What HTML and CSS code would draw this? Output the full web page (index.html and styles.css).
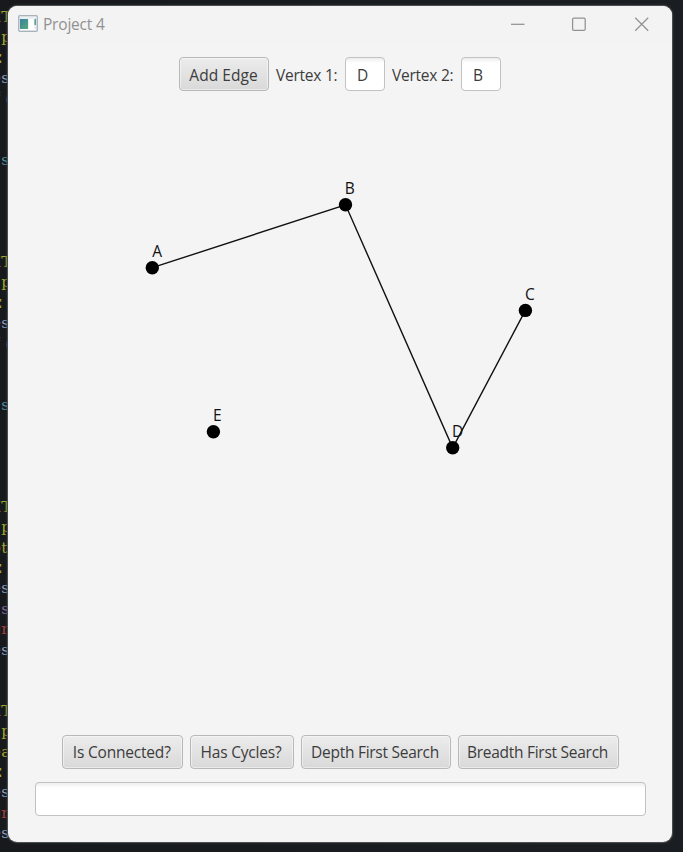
FILE: index.html
```html
<!DOCTYPE html>
<html lang="en">
<head>
<meta charset="utf-8">
<title>Project 4</title>
<link rel="stylesheet" href="styles.css">
</head>
<body>
<pre class="code"><i>E</i><b class="olive">T</b>
<i>-</i><b class="olive">p</b>
<i class="olive colon">:</i>
<i>e</i><b class="blue">s</b>
<i class="teal">f</i> <b class="blue paren">(</b>


<i>.</i><b class="teal">s</b>




<i>E</i><b class="olive">T</b>
<i>-</i><b class="olive">p</b>
<i class="olive colon">:</i>
<i>e</i><b class="blue">s</b>
<i class="teal">f</i> <b class="blue paren">(</b>


<i>.</i><b class="teal">s</b>




<i>E</i><b class="olive">T</b>
<i>-</i><b class="olive">p</b>
<i>o</i><b class="olive">t</b>
<i class="olive colon">:</i>
<i>e</i><b class="blue">s</b>
<i>.</i><b class="purple">s</b>
<i class="red">u</i><b class="red">r</b>
<i>e</i><b class="blue">s</b>


<i>E</i><b class="olive">T</b>
<i>-</i><b class="olive">p</b>
<i>e</i><b class="olive">a</b>
<i class="olive colon">:</i>
<i>e</i><b class="blue">s</b>
<i class="red">u</i><b class="red">r</b>
<i>e</i><b class="blue">s</b></pre>
<main class="window">
  <header class="titlebar">
    <svg class="app-icon" width="20" height="17" viewBox="0 0 20 17">
      <defs><linearGradient id="tile" x1="0" y1="0" x2="1" y2="1"><stop offset="0" stop-color="#3b7f9f"/><stop offset="1" stop-color="#55aa78"/></linearGradient></defs>
      <rect x=".7" y=".7" width="18.6" height="15.6" rx="1" fill="#e9eff2" stroke="#a9b2bb" stroke-width="1.3"/>
      <rect x="2" y="4" width="8" height="10" fill="url(#tile)"/>
      <rect x="11" y="4" width="5" height="10" fill="#fff"/>
      <rect x="16.4" y="4" width="1.6" height="6" fill="#58a58b"/>
      <path d="M2 14.5h16" stroke="#fff"/>
    </svg>
    <h1 class="title">Project 4</h1>
    <svg class="controls" width="140" height="16" viewBox="0 0 140 16" fill="none" stroke="#929292" stroke-width="1.25">
      <path d="M1 8.3h13.5"/>
      <rect x="62.6" y="2" width="12.6" height="12.4" rx="1.2"/>
      <path d="M125.2 1.8l13 13m0-13l-13 13"/>
    </svg>
  </header>
  <form class="toolbar">
    <button class="btn add" type="button"><span>Add Edge</span></button>
    <label class="label" for="v1">Vertex 1:</label>
    <input class="field small" id="v1" value="D">
    <label class="label" for="v2">Vertex 2:</label>
    <input class="field small" id="v2" value="B">
  </form>
  <svg class="graph" width="664" height="644" viewBox="8 91 664 644">
    <g class="edges">
      <path d="M152.3 267.7L345.5 204.8L452.7 447.8L525.4 310.4"/>
    </g>
    <g class="vertices">
      <circle cx="152.3" cy="267.7" r="6.7"/>
      <circle cx="345.5" cy="204.8" r="6.7"/>
      <circle cx="525.4" cy="310.4" r="6.7"/>
      <circle cx="452.7" cy="447.8" r="6.7"/>
      <circle cx="213.4" cy="431.8" r="6.7"/>
    </g>
    <g class="names">
      <text x="152.3" y="257">A</text>
      <text x="344.8" y="194">B</text>
      <text x="525" y="300">C</text>
      <text x="452" y="437">D</text>
      <text x="213" y="421">E</text>
    </g>
  </svg>
  <div class="actions">
    <button class="btn connected" type="button"><span>Is Connected?</span></button>
    <button class="btn cycles" type="button"><span>Has Cycles?</span></button>
    <button class="btn depth" type="button"><span>Depth First Search</span></button>
    <button class="btn breadth" type="button"><span>Breadth First Search</span></button>
  </div>
  <input class="field output" aria-label="Output">
</main>
</body>
</html>
```
FILE: styles.css
```css
* { box-sizing: border-box; }

body {
  margin: 0;
  height: 852px;
  padding: 6px 0 0 8px;
  overflow: hidden;
  position: relative;
  background: linear-gradient(90deg, #17191c, #1a1e22);
  font-family: "Open Sans", "Noto Sans", sans-serif;
  font-size: 15.5px;
  color: #3c3c3c;
}

.code {
  position: absolute;
  left: -9px;
  top: 8px;
  margin: 0;
  font: 17px/20.4px "Liberation Mono", monospace;
}

.code i, .code b { font-style: normal; font-weight: normal; }
.code b { font-family: "DejaVu Serif", serif; font-size: 15.5px; line-height: 1; }
.code i { color: #ae762d; }
.code .olive { color: #a0a82d; }
.code .blue { color: #87a2c6; }
.code .teal { color: #4d949d; }
.code .purple { color: #8c669f; }
.code .red { color: #a8403d; }
.code .paren { margin-left: -6px; }
.code .colon { margin-left: 4px; }

.window {
  position: relative;
  width: 664px;
  height: 836px;
  display: flex;
  flex-direction: column;
  border-radius: 9px;
  background: #f4f4f4;
  box-shadow: 0 0 0 1px #4b4e50, 0 0 3px 1px #303338;
}

.titlebar {
  height: 38px;
  flex: none;
  display: flex;
  align-items: center;
  padding: 0 22px 0 10px;
  border-radius: 9px 9px 0 0;
  background: #f3f3f3;
}

.app-icon { margin-top: -3px; }

.title {
  margin: -2px auto 0 5px;
  font-size: 15.5px;
  font-weight: 400;
  letter-spacing: -0.2px;
  color: #919191;
}

.controls { margin-top: -3px; }

.toolbar {
  display: flex;
  align-items: center;
  margin: 13px 0 0 171px;
  height: 34px;
}

.btn {
  height: 34px;
  padding: 0 1px 0 0;
  border: 1px solid #b8b8b8;
  border-radius: 4px;
  background: linear-gradient(#ececec, #d9d9d9);
  box-shadow: inset 0 0 0 1px rgba(255, 255, 255, .45);
  font: inherit;
  color: inherit;
  white-space: nowrap;
}

.add { width: 90px; margin-right: 7px; letter-spacing: 0.05px; }
.label { width: 69px; padding-top: 1px; white-space: nowrap; letter-spacing: -0.25px; }
.toolbar .btn, .toolbar .field { padding-top: 2px; }

.field {
  height: 34px;
  border: 1px solid #c2c2c2;
  border-radius: 4px;
  background: linear-gradient(#ededed, #fff 5px);
  font: inherit;
  color: inherit;
  outline: 0;
}

.small { width: 40px; padding: 0 0 0 11px; margin-right: 7px; }

.graph { flex: none; }
.edges { fill: none; stroke: #111; stroke-width: 1.4; }
.vertices { fill: #000; }
.names { fill: #111; font-size: 15.5px; }

.actions { display: flex; gap: 7px; margin-left: 54px; }
.connected { width: 120.5px; }
.cycles { width: 104px; }
.depth { width: 150px; }
.breadth { width: 161px; }
.actions .btn { letter-spacing: -0.2px; }
.actions .depth, .actions .breadth { letter-spacing: -0.27px; }

.output { width: 611px; margin: 13px 0 0 27px; padding: 0 10px; }
```
